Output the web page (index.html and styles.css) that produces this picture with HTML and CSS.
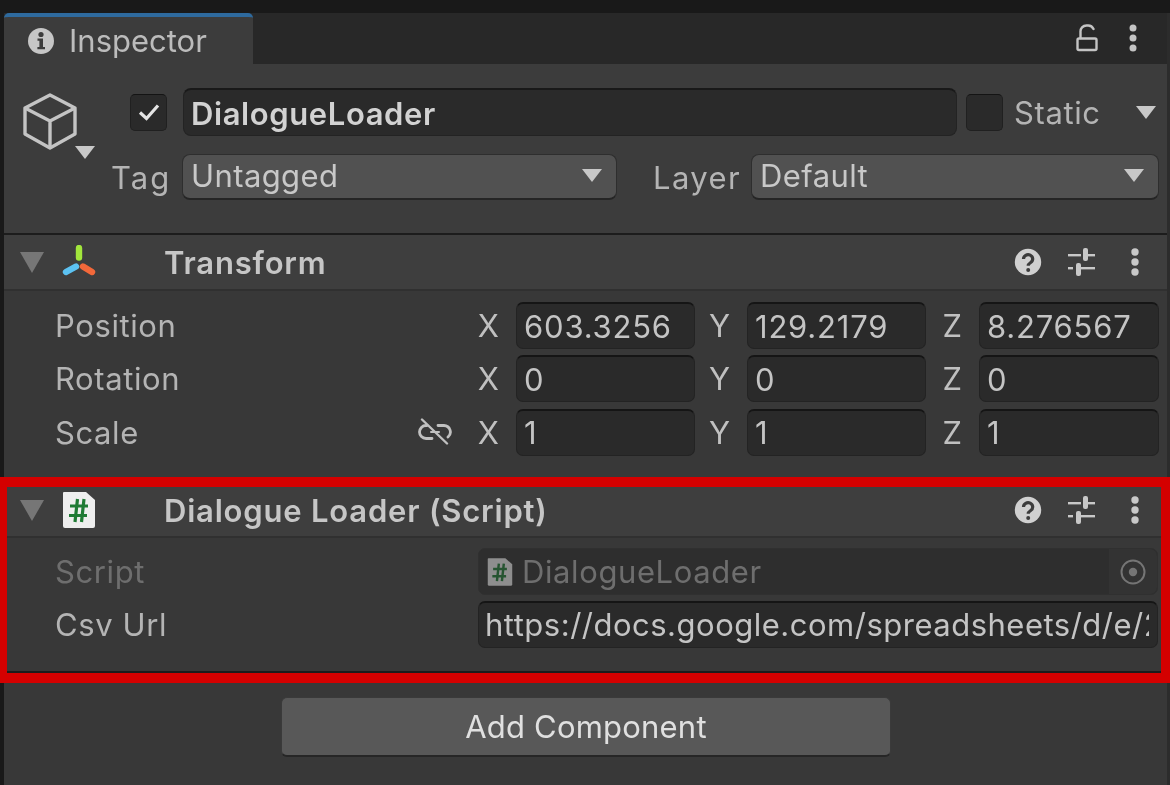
FILE: index.html
```html
<!DOCTYPE html>
<html lang="en">
<head>
    <meta charset="UTF-8">
    <meta name="viewport" content="width=device-width, initial-scale=1.0">
    <title>Inspector</title>
    <link rel="stylesheet" href="styles.css">
</head>
<body>
    <div id="inspector">
        <!-- Tab bar -->
        <div class="tab-bar">
            <div class="tab">
                <svg class="tab-icon" width="28" height="28" viewBox="0 0 28 28">
                    <circle cx="14" cy="14" r="13" fill="#c6c6c6"/>
                    <circle cx="14" cy="7.5" r="2.6" fill="#3c3c3c"/>
                    <path d="M10.5 11.5h5.5v8.5h2v2.2h-7.6V20h2v-6.3h-1.900z" fill="#3c3c3c"/>
                </svg>
                <span>Inspector</span>
            </div>
            <div class="tab-actions">
                <svg width="24" height="28" viewBox="0 0 24 28" fill="none" stroke="#c4c4c4" stroke-width="2.400">
                    <rect x="2.500" y="14.500" width="19" height="11.500" rx="1.500"/>
                    <path d="M5.500 14V8a6 6 0 0 1 6-6.500h1a6 6 0 0 1 6 3.500" stroke-linecap="round"/>
                </svg>
                <svg width="8" height="28" viewBox="0 0 8 28" fill="#c4c4c4">
                    <circle cx="4" cy="4" r="3.500"/><circle cx="4" cy="14" r="3.500"/><circle cx="4" cy="24" r="3.500"/>
                </svg>
            </div>
        </div>

        <!-- GameObject header -->
        <div class="object-header">
            <div class="object-icon">
                <svg width="58" height="58" viewBox="0 0 58 58" fill="none" stroke="#c4c4c4" stroke-width="3.400" stroke-linejoin="round">
                    <path d="M27 2 L52 15 V41 L27 55 L2 41 V15 Z"/>
                    <path d="M2 15 L27 28 L52 15 M27 28 V55"/>
                </svg>
                <span class="caret caret-object"></span>
            </div>
            <div class="object-fields">
                <div class="name-row">
                    <span class="checkbox">
                        <svg width="24" height="20" viewBox="0 0 24 20" fill="none" stroke="#e4e4e4" stroke-width="3.200">
                            <path d="M3 10.500 L9.500 16.500 L21 3.500"/>
                        </svg>
                    </span>
                    <div class="name-field">DialogueLoader</div>
                    <span class="checkbox static-box"></span>
                    <span class="static-label">Static</span>
                    <span class="caret caret-static"></span>
                </div>
                <div class="tag-row">
                    <span class="tag-label">Tag</span>
                    <div class="select select-tag">Untagged<span class="caret"></span></div>
                    <span class="layer-label">Layer</span>
                    <div class="select select-layer">Default<span class="caret"></span></div>
                </div>
            </div>
        </div>

        <!-- Transform -->
        <div class="comp-header">
            <span class="fold"></span>
            <svg class="comp-icon" width="34" height="34" viewBox="0 0 34 34" fill="none" stroke-width="6.400" stroke-linecap="round">
                <path d="M17 3 V12.500" stroke="#a2e63c"/>
                <path d="M14 21.500 L4 27" stroke="#5cc2f2"/>
                <path d="M21 21.500 L30 27" stroke="#f2683a"/>
            </svg>
            <span class="comp-title">Transform</span>
            <div class="comp-actions">
                <svg width="28" height="28" viewBox="0 0 28 28"><use href="#help"/></svg>
                <svg width="28" height="28" viewBox="0 0 28 28"><use href="#sliders"/></svg>
                <svg class="comp-dots" width="8" height="28" viewBox="0 0 8 28"><use href="#dots"/></svg>
            </div>
        </div>
        <div class="comp-body">
            <div class="vec-row">
                <span class="prop-label">Position</span>
                <span class="axis">X</span><div class="field">603.3256</div>
                <span class="axis axis-y">Y</span><div class="field">129.2179</div>
                <span class="axis axis-z">Z</span><div class="field field-z">8.276567</div>
            </div>
            <div class="vec-row">
                <span class="prop-label">Rotation</span>
                <span class="axis">X</span><div class="field">0</div>
                <span class="axis axis-y">Y</span><div class="field">0</div>
                <span class="axis axis-z">Z</span><div class="field field-z">0</div>
            </div>
            <div class="vec-row">
                <span class="prop-label">Scale
                    <svg class="link-icon" width="34" height="28" viewBox="0 0 34 28" fill="none" stroke="#c0c0c0" stroke-width="2.800" stroke-linecap="round">
                        <path d="M9 7.500H8a6.500 6.500 0 0 0 0 13h6"/>
                        <path d="M20 7.500h6a6.500 6.500 0 0 1 4 11.500"/>
                        <path d="M13 14h8" stroke-width="2"/>
                        <path d="M4 1.500 L29 25.500" stroke-width="2.400"/>
                    </svg>
                </span>
                <span class="axis">X</span><div class="field">1</div>
                <span class="axis axis-y">Y</span><div class="field">1</div>
                <span class="axis axis-z">Z</span><div class="field field-z">1</div>
            </div>
        </div>

        <!-- Dialogue Loader script -->
        <div class="script-section">
            <div class="comp-header script-header">
                <span class="fold"></span>
                <svg class="comp-icon" width="34" height="38" viewBox="0 0 34 38"><use href="#script-doc"/></svg>
                <span class="comp-title">Dialogue Loader (Script)</span>
                <div class="comp-actions">
                    <svg width="28" height="28" viewBox="0 0 28 28"><use href="#help"/></svg>
                    <svg width="28" height="28" viewBox="0 0 28 28"><use href="#sliders"/></svg>
                    <svg class="comp-dots" width="8" height="28" viewBox="0 0 8 28"><use href="#dots"/></svg>
                </div>
            </div>
            <div class="script-body">
                <div class="prop-row">
                    <span class="prop-label disabled">Script</span>
                    <div class="object-field">
                        <svg width="26" height="30" viewBox="0 0 34 38" opacity="0.5"><use href="#script-doc"/></svg>
                        <span>DialogueLoader</span>
                        <div class="target">
                            <svg width="26" height="26" viewBox="0 0 26 26">
                                <circle cx="13" cy="13" r="11.500" fill="none" stroke="#757575" stroke-width="2"/>
                                <circle cx="13" cy="13" r="4.200" fill="#757575"/>
                            </svg>
                        </div>
                    </div>
                </div>
                <div class="prop-row">
                    <span class="prop-label">Csv Url</span>
                    <div class="url-field"><span class="url-text">https://docs.google.com/spreadsheets/d/e/2PACX-1vQ</span></div>
                </div>
            </div>
        </div>

        <div class="footer">
            <button class="add-button">Add Component</button>
        </div>
    </div>

    <!-- Shared icons -->
    <svg class="defs" width="0" height="0">
        <defs>
            <g id="help">
                <circle cx="14" cy="14" r="13.200" fill="#d0d0d0"/>
                <path d="M9.500 11a4.600 4.300 0 1 1 7.200 3.500c-1.600 1.100-2.500 1.800-2.500 3.300" fill="none" stroke="#3c3c3c" stroke-width="3.200"/>
                <circle cx="14.200" cy="22" r="2" fill="#3c3c3c"/>
            </g>
            <g id="sliders" fill="#c8c8c8">
                <rect x="0" y="6" width="13" height="2.400"/>
                <rect x="20" y="6" width="7" height="2.400"/>
                <rect x="15" y="0" width="5" height="13" rx="2"/>
                <rect x="0" y="19" width="5" height="2.400"/>
                <rect x="11" y="19" width="16" height="2.400"/>
                <rect x="8" y="15" width="5" height="13" rx="2"/>
            </g>
            <g id="dots" fill="#c8c8c8">
                <circle cx="4" cy="4" r="3.700"/><circle cx="4" cy="14" r="3.700"/><circle cx="4" cy="24" r="3.700"/>
            </g>
            <g id="script-doc">
                <path d="M2 1H24L33 9V35a2 2 0 0 1-2 2H3a2 2 0 0 1-2-2V2a1 1 0 0 1 1-1z" fill="#eeeeee"/>
                <path d="M13 31 L15.500 8 M19.500 31 L22 8 M8 15H26 M7 24.500H25" stroke="#1f7a34" stroke-width="3.200" fill="none"/>
            </g>
        </defs>
    </svg>
</body>
</html>
```

FILE: styles.css
```css
*, *::after {
    box-sizing: border-box;
}

html, body {
    margin: 0;
    height: 100%;
    overflow: hidden;
}

body {
    background-color: #191919;
    font-family: "Inter", "Liberation Sans", sans-serif;
    font-size: 31px;
    letter-spacing: 0.6px;
    color: #c2c2c2;
}

.defs {
    position: absolute;
}

#inspector {
    height: 772px;
    margin-top: 13px;
    margin-left: 4px;
    width: 1166px;
    background-color: #383838;
    border-right: 3px solid #2c2c2c;
    filter: blur(0.5px);
}

/* Tab bar */
.tab-bar {
    display: flex;
    justify-content: space-between;
    height: 51px;
    background-color: #282828;
}

.tab {
    display: flex;
    align-items: center;
    gap: 14px;
    width: 249px;
    padding-left: 23px;
    background-color: #3c3c3c;
    border-top: 4px solid #2e6a9e;
    border-radius: 5px 5px 0 0;
    letter-spacing: 0;
    color: #bcbcbc;
}

.tab-actions {
    display: flex;
    align-items: center;
    gap: 30px;
    padding-right: 30px;
    padding-bottom: 2px;
}

/* GameObject header */
.object-header {
    display: flex;
    height: 171px;
    background-color: #3c3c3c;
    border-bottom: 2px solid #1c1c1c;
}

.object-icon {
    position: relative;
    width: 107px;
    padding: 29px 0 0 19px;
}

.caret {
    display: inline-block;
    width: 0;
    height: 0;
    border-left: 10px solid transparent;
    border-right: 10px solid transparent;
    border-top: 13px solid #c8c8c8;
}

.caret-object {
    position: absolute;
    left: 71px;
    top: 82px;
}

.object-fields {
    display: flex;
    flex-direction: column;
    flex: 1;
    padding-top: 24px;
}

.name-row {
    display: flex;
    align-items: center;
    height: 48px;
    padding-left: 19px;
}

.checkbox {
    display: flex;
    align-items: center;
    justify-content: center;
    width: 37px;
    height: 37px;
    background-color: #2a2a2a;
    border: 1px solid #202020;
    border-top-color: #141414;
    border-radius: 5px;
}

.name-field {
    display: flex;
    align-items: center;
    width: 774px;
    height: 48px;
    margin-left: 16px;
    padding-left: 7px;
    padding-top: 1px;
    background-color: #2a2a2a;
    border: 1px solid #232323;
    border-top: 2px solid #191919;
    border-radius: 8px;
    font-weight: 600;
    color: #d2d2d2;
}

.static-box {
    margin-left: 9px;
}

.static-label {
    margin-left: 11px;
    color: #b4b4b4;
}

.caret-static {
    margin-left: 35px;
}

.tag-row {
    display: flex;
    align-items: center;
    height: 46px;
    margin-top: 18px;
}

.tag-label {
    width: 71px;
    letter-spacing: 2px;
    color: #b4b4b4;
}

.layer-label {
    width: 98px;
    margin-left: 36px;
    letter-spacing: 1.400px;
    color: #b4b4b4;
}

.select {
    display: flex;
    align-items: center;
    justify-content: space-between;
    height: 46px;
    padding: 0 14px 2px 8px;
    background-color: #515151;
    border: 1px solid #2e2e2e;
    border-bottom: 2px solid #252525;
    border-radius: 8px;
    letter-spacing: 0.400px;
    color: #c8c8c8;
}

.select-tag {
    width: 435px;
}

.select-layer {
    width: 408px;
}

/* Components */
.comp-header {
    display: flex;
    align-items: center;
    height: 56px;
    padding-left: 16px;
    background-color: #3e3e3e;
    border-bottom: 2px solid #303030;
}

.fold {
    width: 0;
    height: 0;
    border-left: 12px solid transparent;
    border-right: 12px solid transparent;
    border-top: 21px solid #767676;
}

.comp-icon {
    margin-left: 18px;
}

.comp-title {
    margin-left: 68px;
    font-weight: 600;
    letter-spacing: 0.800px;
    color: #c6c6c6;
}

.comp-actions {
    display: flex;
    align-items: center;
    gap: 26px;
    margin-left: auto;
    padding-right: 28px;
}

.comp-dots {
    margin-left: 9px;
}

.comp-body {
    height: 196px;
    padding-top: 8px;
}

.vec-row {
    display: flex;
    align-items: center;
    height: 53.300px;
    padding-left: 51px;
}

.vec-row .prop-label {
    display: flex;
    align-items: center;
    justify-content: space-between;
    width: 397px;
}

.prop-label {
    color: #b4b4b4;
}

.prop-label.disabled {
    color: #6e6e6e;
}

.axis {
    width: 64px;
    padding-right: 17px;
    text-align: right;
    letter-spacing: 0;
    color: #c0c0c0;
}

.axis-y {
    width: 52px;
}

.axis-z {
    width: 53px;
}

.field {
    display: flex;
    align-items: center;
    width: 179px;
    height: 47px;
    padding-left: 7px;
    background-color: #2a2a2a;
    border: 1px solid #232323;
    border-top: 2px solid #151515;
    border-radius: 7px;
    letter-spacing: 0.800px;
    color: #c4c4c4;
}

.field-z {
    width: 180px;
}

/* Script section, the red highlight is drawn over it */
.script-section {
    position: relative;
    height: 186px;
    border-bottom: 2px solid #1c1c1c;
}

.script-section::after {
    content: "";
    position: absolute;
    top: -10px;
    left: -4px;
    right: -3px;
    height: 206px;
    border: solid #d40000;
    border-width: 10px 9px 10px 7px;
    pointer-events: none;
}

.script-header {
    height: 51px;
    padding-bottom: 3px;
}

.script-body {
    padding-top: 7px;
}

.prop-row {
    display: flex;
    align-items: center;
    height: 53px;
    padding-left: 51px;
}

.prop-row .prop-label {
    width: 423px;
}

.object-field {
    display: flex;
    align-items: center;
    gap: 9px;
    width: 680px;
    height: 47px;
    padding-left: 8px;
    background-color: #2e2e2e;
    border: 1px solid #303030;
    border-radius: 7px;
    color: #6e6e6e;
}

.target {
    display: flex;
    align-items: center;
    justify-content: center;
    width: 48px;
    height: 45px;
    margin-left: auto;
    background-color: #333333;
    border-radius: 0 7px 7px 0;
}

.url-field {
    width: 680px;
    height: 47px;
    padding: 0 8px 0 6px;
    background-color: #2a2a2a;
    border: 1px solid #232323;
    border-top: 2px solid #151515;
    border-radius: 7px;
}

.url-text {
    display: block;
    overflow: hidden;
    white-space: nowrap;
    line-height: 44px;
    letter-spacing: 0.500px;
    color: #c4c4c4;
}

/* Footer */
.footer {
    display: flex;
    justify-content: center;
    padding-top: 24px;
    padding-left: 1px;
}

.add-button {
    width: 610px;
    height: 60px;
    background-color: #585858;
    border: 1px solid #3a3a3a;
    border-bottom: 2px solid #262626;
    border-radius: 6px;
    font-family: "Inter", "Liberation Sans", sans-serif;
    font-size: 31px;
    letter-spacing: 0.200px;
    color: #e0e0e0;
}
```
